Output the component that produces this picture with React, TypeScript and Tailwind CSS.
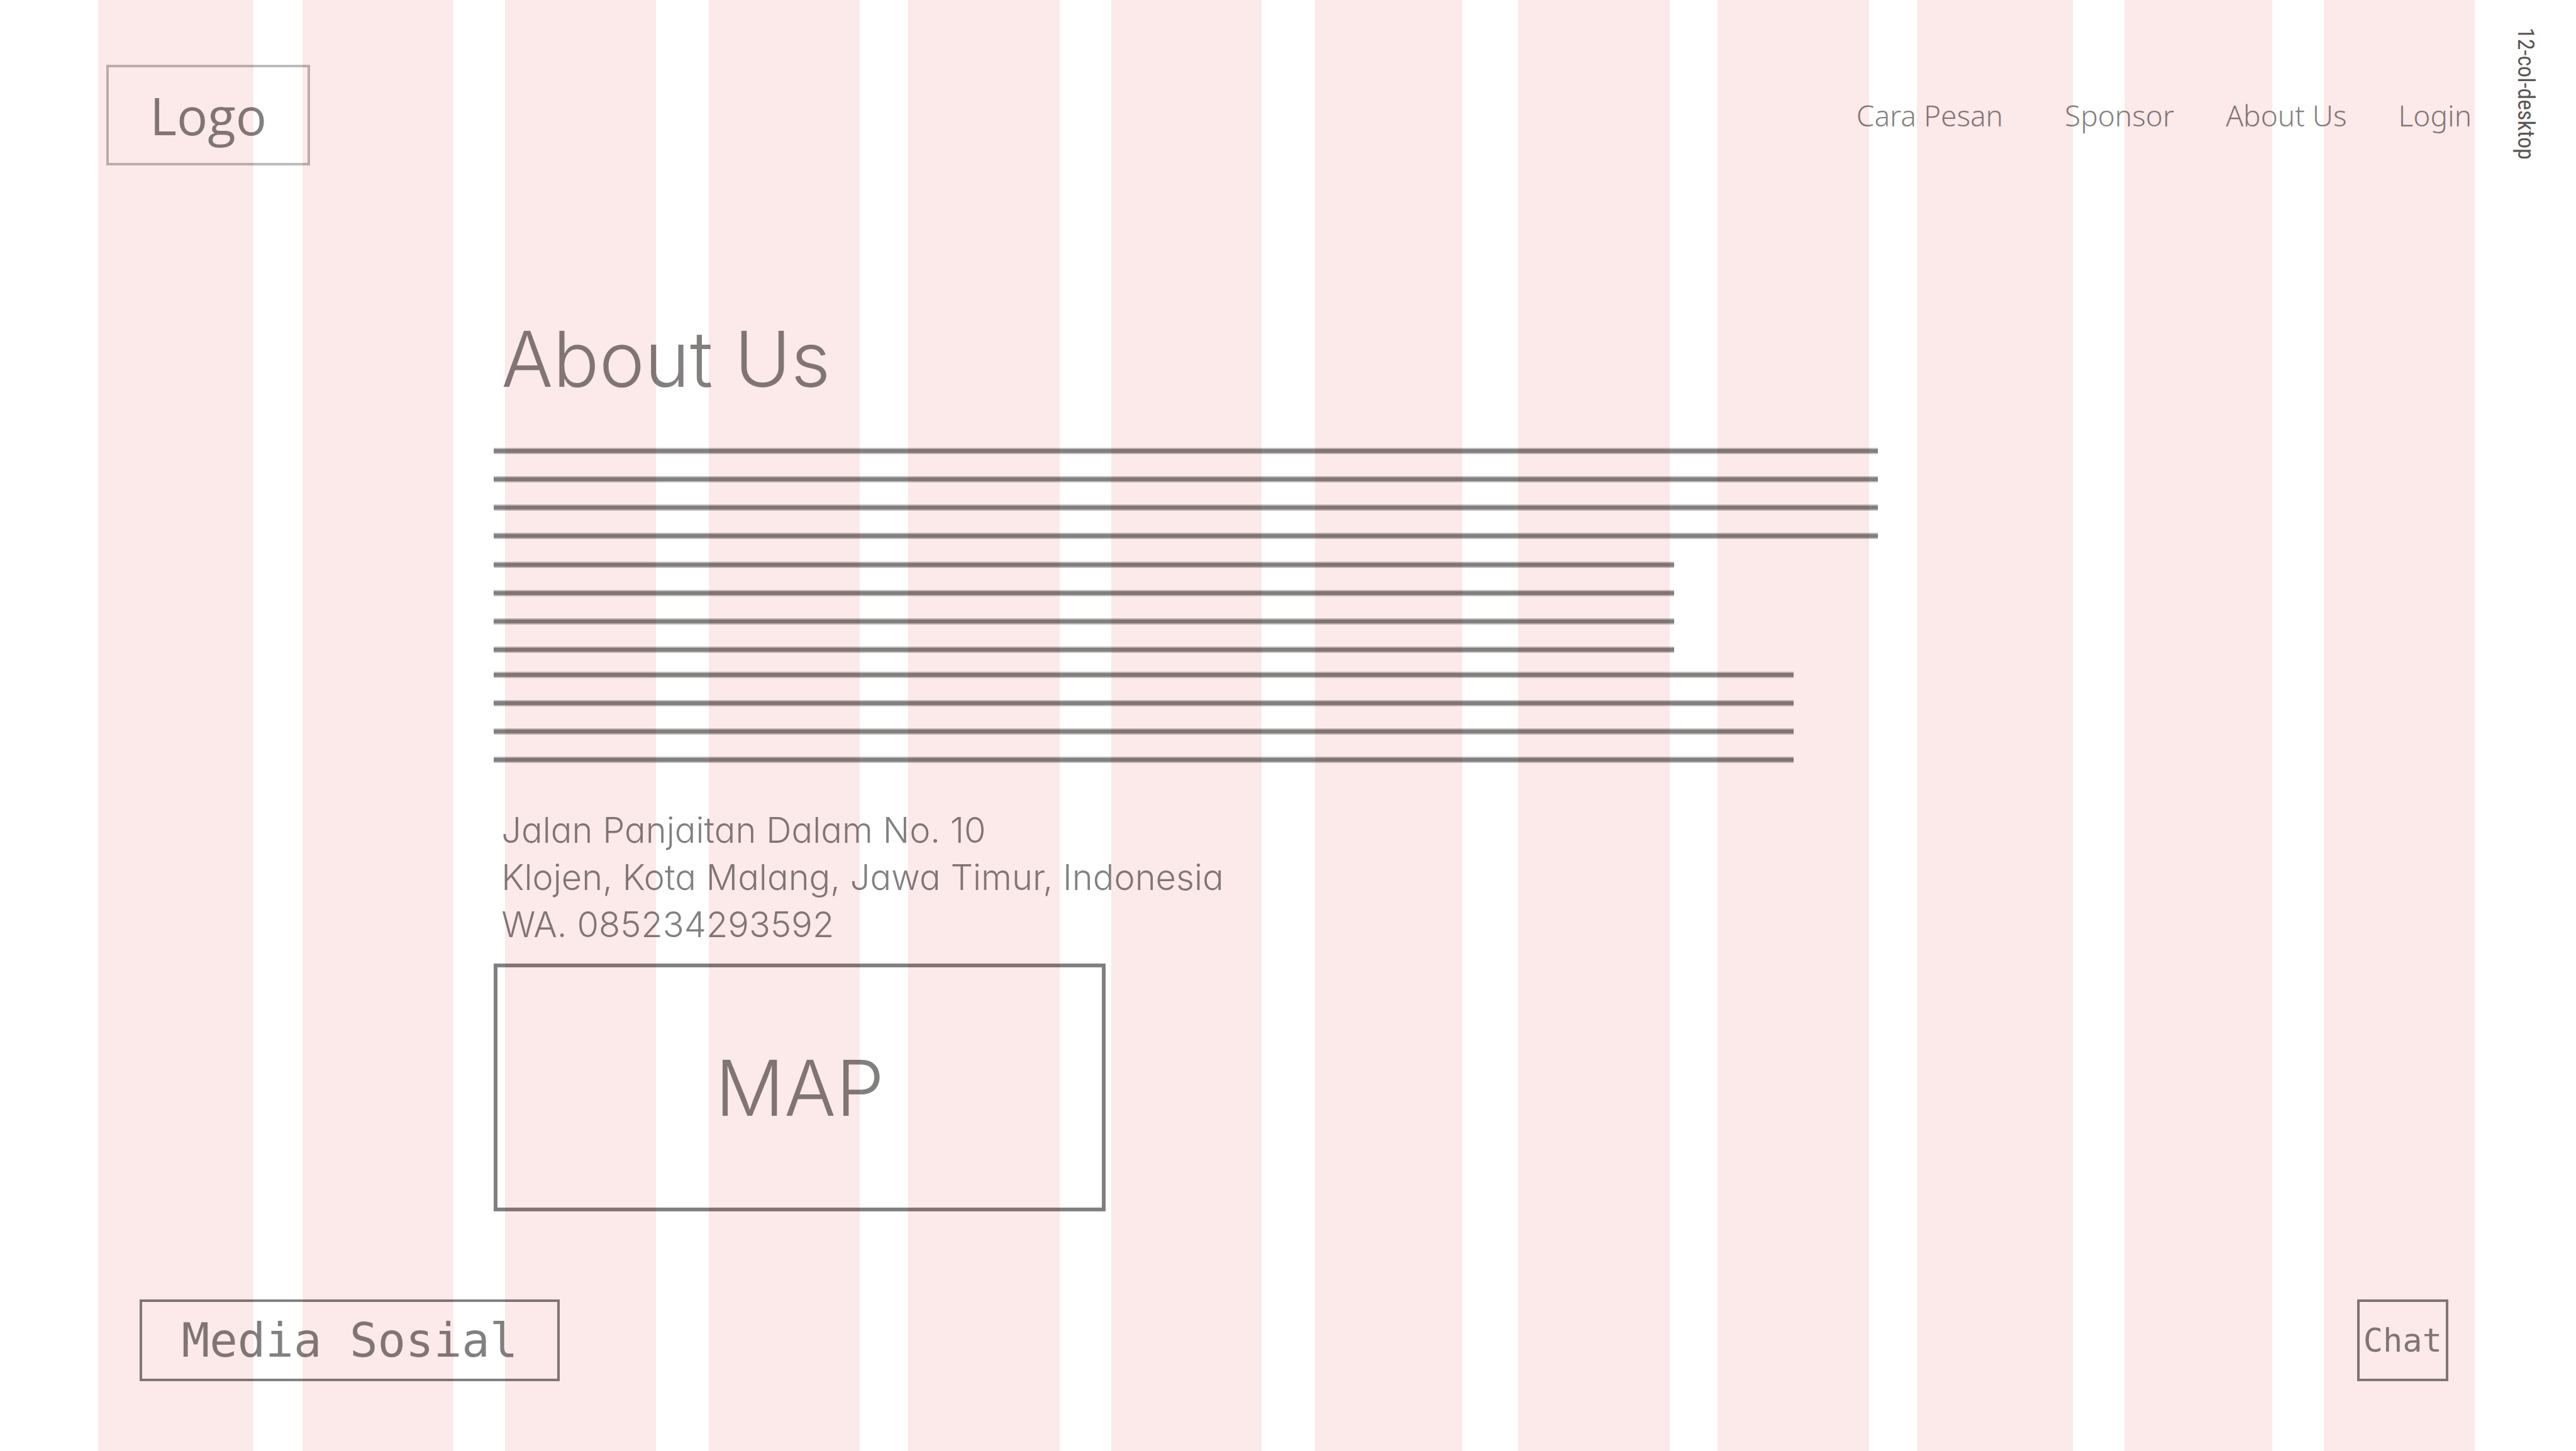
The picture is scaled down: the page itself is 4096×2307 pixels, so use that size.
const NAV_LINKS = [
  { label: "Cara Pesan", href: "#cara-pesan" },
  { label: "Sponsor", href: "#sponsor" },
  { label: "About Us", href: "#about-us" },
  { label: "Login", href: "#login" },
];

const PARAGRAPHS = [
  { id: "first", width: "w-full" },
  { id: "second", width: "w-[85.3%]" },
  { id: "third", width: "w-[93.9%]" },
];

const GUIDE_COLUMNS = Array.from({ length: 12 }, (_, i) => i);

function ColumnGuides() {
  return (
    <div className="col-start-1 row-start-1 grid grid-cols-[156fr_247fr_78fr_240fr_82fr_240fr_84fr_240fr_77fr_241fr_82fr_239fr_85fr_234fr_89fr_241fr_76fr_241fr_76fr_248fr_82fr_235fr_82fr_240fr_161fr]">
      {GUIDE_COLUMNS.map((i) => (
        <div key={i} className="contents">
          <div />
          <div className="bg-[#fce9e9]" />
        </div>
      ))}
      <div className="flex justify-center pt-11">
        <span className="h-fit font-['Roboto_Condensed','Roboto',sans-serif] text-[36px] leading-none whitespace-nowrap text-[#5b5656] [writing-mode:vertical-rl]">
          12-col-desktop
        </span>
      </div>
    </div>
  );
}

function Header() {
  return (
    <header className="flex items-center justify-between pt-[103px] pr-[4.05%] pl-[4.13%]">
      <a
        href="#home"
        className="flex h-40 w-[324px] items-center justify-center border-4 border-[#060000]/27 font-['Open_Sans',sans-serif] text-[82px]"
      >
        Logo
      </a>
      <nav className="flex gap-[82px] font-['Noto_Sans',sans-serif] text-[46px] font-light">
        {NAV_LINKS.map((link) => (
          <a key={link.href} href={link.href} className="first:mr-4">
            {link.label}
          </a>
        ))}
      </nav>
    </header>
  );
}

function TextPlaceholder() {
  return (
    <div className="mt-[67px] flex flex-col">
      {PARAGRAPHS.map((p) => (
        <div key={p.id} className={`${p.width} mb-9 flex flex-col gap-[35px] last:-mt-1.5 last:mb-0`}>
          {[0, 1, 2, 3].map((line) => (
            <div key={line} className="h-2.5 border-y-2 border-[#060000]/25 bg-[#060000]/50 bg-clip-padding" />
          ))}
        </div>
      ))}
    </div>
  );
}

function AboutSection() {
  return (
    <main className="mt-[234px] ml-[19.17%] w-[53.73%] font-['Inter',sans-serif] font-light [font-feature-settings:'cv11']">
      <h1 className="pl-3 text-[122px] leading-[148px]">About Us</h1>
      <TextPlaceholder />
      <address className="mt-[70px] pl-3 text-[56px] leading-[75px] whitespace-nowrap not-italic">
        <p>Jalan Panjaitan Dalam No. 10</p>
        <p>Klojen, Kota Malang, Jawa Timur, Indonesia</p>
        <p>WA. 085234293592</p>
      </address>
      <div className="mt-6 flex h-[394px] w-[44.2%] items-center justify-center border-6 border-[#060000]/50 text-[122px]">
        MAP
      </div>
    </main>
  );
}

function Footer() {
  return (
    <footer className="mt-auto flex justify-between pr-[4.96%] pb-[111px] pl-[5.42%] font-['DejaVu_Sans_Mono',monospace]">
      <a
        href="#media-sosial"
        className="flex h-[130px] w-[668px] items-center justify-center border-4 border-[#060000]/50 text-[74px] whitespace-nowrap"
      >
        Media Sosial
      </a>
      <button
        type="button"
        className="flex h-[130px] w-[145px] items-center justify-center border-4 border-[#060000]/50 text-[52px]"
      >
        Chat
      </button>
    </footer>
  );
}

export default function App() {
  return (
    <div className="grid min-h-screen grid-cols-1 bg-white text-[#060000]/50">
      <ColumnGuides />
      <div className="col-start-1 row-start-1 flex flex-col">
        <Header />
        <AboutSection />
        <Footer />
      </div>
    </div>
  );
}
